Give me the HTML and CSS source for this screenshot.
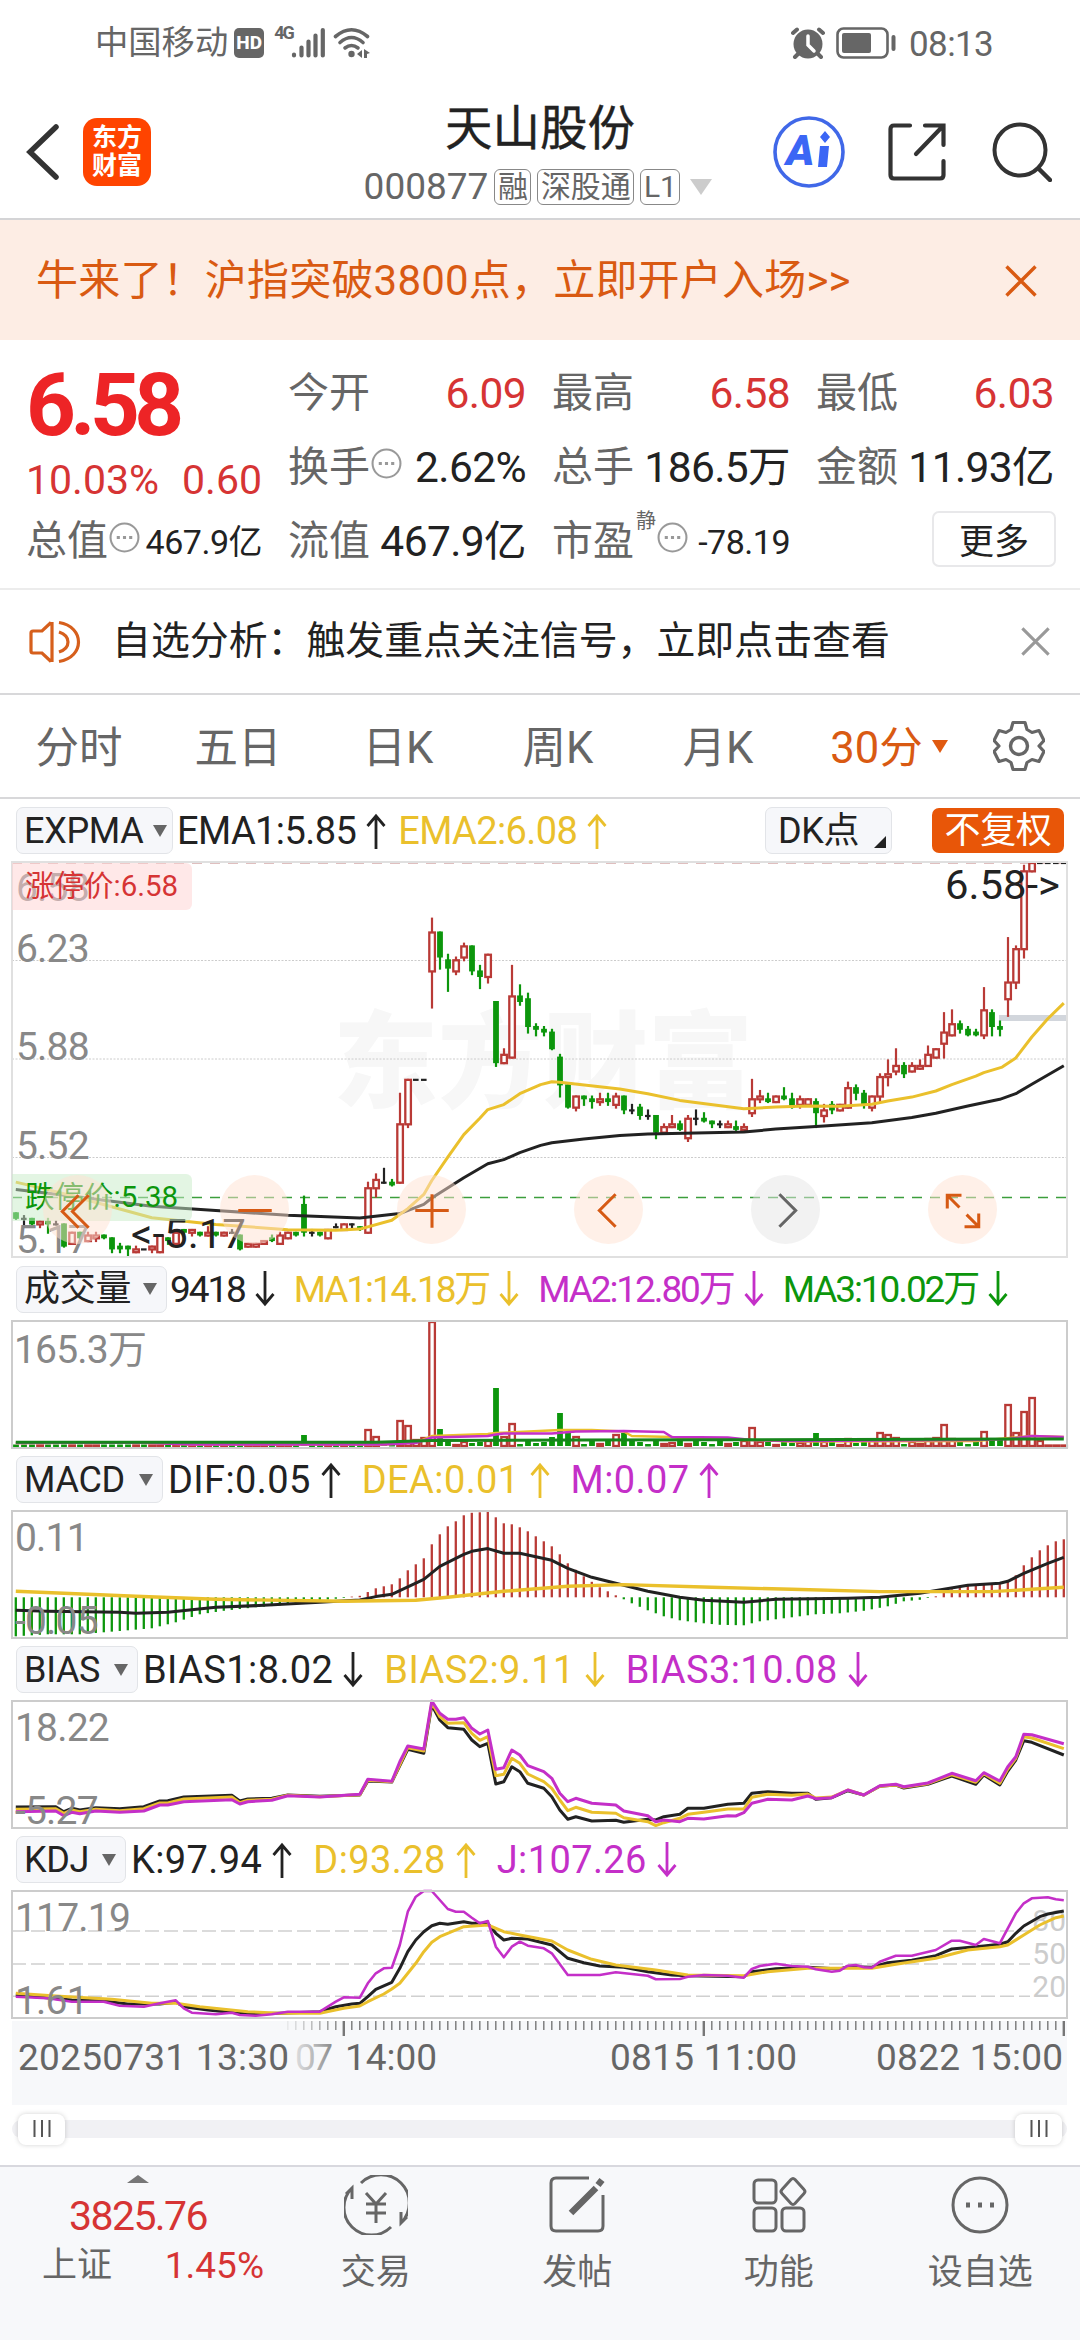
FILE: index.html
```html
<!DOCTYPE html>
<html lang="zh-CN">

<head>
    <meta charset="UTF-8">
    <meta name="viewport" content="width=device-width, initial-scale=1.0">
    <title>天山股份 000877</title>
    <link rel="stylesheet" href="styles.css">
</head>

<body>

    <!-- Shared icons -->
    <svg class="defs">
        <symbol id="up" viewBox="0 0 20 36">
            <path d="M10 36V3M1.500 13L10 3l8.500 10" fill="none" stroke="currentColor" stroke-width="2.800" />
        </symbol>
        <symbol id="down" viewBox="0 0 20 36">
            <path d="M10 0v33M1.500 23l8.500 10 8.500-10" fill="none" stroke="currentColor" stroke-width="2.800" />
        </symbol>
        <symbol id="close" viewBox="0 0 32 32">
            <path d="M1.500 1.500l29 29M30.500 1.500l-29 29" fill="none" stroke="currentColor" stroke-width="3.400" />
        </symbol>
        <symbol id="more" viewBox="0 0 30 30">
            <circle cx="15" cy="15" r="13.500" fill="none" stroke="#999" stroke-width="2" />
            <path d="M7.500 15h3M13.500 15h3M19.500 15h3" stroke="#999" stroke-width="3" />
        </symbol>
        <symbol id="grip" viewBox="0 0 18 18">
            <path d="M1.500 0v17M9 0v17M16.500 0v17" stroke="#555" stroke-width="2" />
        </symbol>
    </svg>

    <div class="status-bar">
        <span class="carrier">中国移动</span>
        <span class="hd">HD</span>
        <span class="net">4G</span>
        <svg class="signal" width="35" height="32" viewBox="0 0 35 32">
            <path d="M3 28.500v-1M10.500 28.500v-8M17.500 28.500v-14M24.500 28.500v-20M31.800 28.500V3" fill="none" stroke="#666"
                stroke-width="4.200" stroke-linecap="round" />
        </svg>
        <svg class="wifi" width="38" height="32" viewBox="0 0 38 32">
            <g fill="none" stroke="#666" stroke-width="3.600" stroke-linecap="round">
                <path d="M2.500 9.500Q18.500-4 34.500 9.500" />
                <path d="M7 15.500Q18.500 5.500 30 15.500" />
                <path d="M12 21Q18.500 16 25 21" />
            </g>
            <circle cx="18.500" cy="27" r="3.200" fill="#666" />
            <path d="M24 27l5-4v8zM31 22l6 4-3 1v4h-3z" fill="#666" />
        </svg>
        <svg class="alarm" width="34" height="32" viewBox="0 0 34 32">
            <circle cx="17" cy="17" r="14.500" fill="#666" />
            <path d="M2 6l4-3.500M32 6l-4-3.500M7 27l-3 3M27 27l3 3" stroke="#666" stroke-width="4" stroke-linecap="round" />
            <path d="M17 9v9l6 6" fill="none" stroke="#fff" stroke-width="3.500" stroke-linecap="round" />
        </svg>
        <svg class="battery" width="60" height="32" viewBox="0 0 60 32">
            <rect x="1.500" y="1.500" width="50" height="29" rx="6" fill="none" stroke="#666" stroke-width="2.600" />
            <rect x="6" y="6" width="29" height="20" rx="2" fill="#666" />
            <path d="M57.500 10v12" stroke="#666" stroke-width="4" stroke-linecap="round" />
        </svg>
        <span class="clock">08:13</span>
    </div>

    <header class="header">
        <svg class="back" width="34" height="56" viewBox="0 0 34 56">
            <path d="M30 3L4 28l26 25" fill="none" stroke="#333" stroke-width="5.500" stroke-linecap="round" />
        </svg>
        <div class="logo">东方<br>财富</div>
        <div class="title">
            <h1>天山股份</h1>
            <div class="code">
                <span>000877</span>
                <em>融</em><em>深股通</em><em>L1</em>
                <svg width="22" height="16" viewBox="0 0 22 16"><path d="M0 0h22L11 16z" fill="#ccc" /></svg>
            </div>
        </div>
        <svg class="ai" width="74" height="74" viewBox="0 0 74 74">
            <circle cx="37" cy="37" r="34" fill="none" stroke="#4068e8" stroke-width="3.600" />
            <text x="14" y="50" class="ai-text">A</text>
            <path d="M48 31h9l-2 21h-9zM53 16l5 6-5 6-5-6z" fill="#3b66f5" />
        </svg>
        <svg class="share" width="58" height="58" viewBox="0 0 58 58">
            <path d="M22 2.500H6Q2.500 2.500 2.500 6v46q0 3.500 3.500 3.500h46q3.500 0 3.500-3.500V38M37 2.500h18.500V22M55 3L28 31" fill="none"
                stroke="#333" stroke-width="4.200" stroke-linecap="round" />
        </svg>
        <svg class="search" width="60" height="60" viewBox="0 0 60 60">
            <circle cx="28" cy="28" r="25.500" fill="none" stroke="#333" stroke-width="4" />
            <path d="M47 47l11 11" stroke="#333" stroke-width="4.500" stroke-linecap="round" />
        </svg>
    </header>

    <div class="banner">
        <span>牛来了！沪指突破3800点，立即开户入场&gt;&gt;</span>
        <svg width="32" height="32"><use href="#close" /></svg>
    </div>

    <section class="quote">
        <div class="quote-price">
            <strong>6.58</strong>
            <div class="change"><span>10.03%</span><span>0.60</span></div>
            <div class="cell"><label>总值</label><svg class="tip"><use href="#more" /></svg><b class="small">467.9亿</b></div>
        </div>
        <div class="quote-grid">
            <div class="cell"><label>今开</label><b class="red">6.09</b></div>
            <div class="cell"><label>最高</label><b class="red">6.58</b></div>
            <div class="cell"><label>最低</label><b class="red">6.03</b></div>
            <div class="cell"><label>换手</label><svg class="tip"><use href="#more" /></svg><b>2.62%</b></div>
            <div class="cell"><label>总手</label><b>186.5万</b></div>
            <div class="cell"><label>金额</label><b>11.93亿</b></div>
            <div class="cell"><label>流值</label><b>467.9亿</b></div>
            <div class="cell"><label>市盈</label><sup>静</sup><svg class="tip"><use href="#more" /></svg><b class="small">-78.19</b></div>
            <div class="cell end"><button>更多</button></div>
        </div>
    </section>

    <div class="notice">
        <svg width="52" height="44" viewBox="0 0 52 44">
            <path d="M23 2v40M22 2.500L13 11H4q-2 0-2 2v18q0 2 2 2h9l9 8.500" fill="none" stroke="#d65f1c" stroke-width="3.200" />
            <path d="M30 2.500c26 4 26 35 0 39M30 12c12 4 12 16 0 20" fill="none" stroke="#d65f1c" stroke-width="3.200" />
        </svg>
        <span>自选分析：触发重点关注信号，立即点击查看</span>
        <svg class="dismiss" width="29" height="29"><use href="#close" /></svg>
    </div>

    <nav class="tabs">
        <a>分时</a><a>五日</a><a>日K</a><a>周K</a><a>月K</a>
        <a class="active">30分<svg width="16" height="13" viewBox="0 0 16 13"><path d="M0 0h16L8 13z" fill="#e05a10" /></svg></a>
        <svg class="gear" width="52" height="52" viewBox="0 0 52 52">
            <path d="M20 2.500h12l2 7 5 3 7-2 5 10-5 5.500 5 5.500-5 10-7-2-5 3-2 7H20l-2-7-5-3-7 2-5-10 5-5.500-5-5.500 5-10 7 2 5-3z" fill="none"
                stroke="#666" stroke-width="3.200" stroke-linejoin="round" />
            <circle cx="26" cy="26" r="8.500" fill="none" stroke="#666" stroke-width="3.400" />
        </svg>
    </nav>

    <main>
        <div class="legend price-legend">
            <span class="chip" style="width: 157px">EXPMA<i></i></span>
            <span>EMA1:5.85<svg><use href="#up" /></svg></span>
            <span class="yellow">EMA2:6.08<svg><use href="#up" /></svg></span>
            <span class="chip dk">DK点<u></u></span>
            <span class="chip fq">不复权</span>
        </div>
        <div class="price-chart">
            <svg id="price" width="1055" height="394"></svg>
            <div class="limit limit-up">涨停价:6.58</div>
            <div class="limit limit-down">跌停价:5.38</div>
            <div class="tools">
                <svg viewBox="0 0 68 68"><path d="M35 20L19 36l16 16M45 20L29 36l16 16" /></svg>
                <svg viewBox="0 0 68 68"><path d="M18 35h33" /></svg>
                <svg viewBox="0 0 68 68"><path d="M18 35h33M34.500 19v33" /></svg>
                <svg viewBox="0 0 68 68"><path d="M41 19L25 35l16 16" /></svg>
                <svg class="off" viewBox="0 0 68 68"><path d="M28 19l16 16-16 16" /></svg>
                <svg viewBox="0 0 68 68"><path d="M19 33V20h14M19 20l12 12M50 38v13H36M50 51L38 39" /></svg>
            </div>
        </div>

        <div class="legend volume-legend">
            <span class="chip" style="width: 151px">成交量<i></i></span>
            <span>9418<svg><use href="#down" /></svg></span>
            <span class="yellow">MA1:14.18万<svg><use href="#down" /></svg></span>
            <span class="purple">MA2:12.80万<svg><use href="#down" /></svg></span>
            <span class="green">MA3:10.02万<svg><use href="#down" /></svg></span>
        </div>
        <svg class="sub" id="volume"></svg>

        <div class="legend">
            <span class="chip" style="width: 147px">MACD<i></i></span>
            <span>DIF:0.05<svg><use href="#up" /></svg></span>
            <span class="yellow">DEA:0.01<svg><use href="#up" /></svg></span>
            <span class="purple">M:0.07<svg><use href="#up" /></svg></span>
        </div>
        <svg class="sub" id="macd"></svg>

        <div class="legend">
            <span class="chip" style="width: 122px">BIAS<i></i></span>
            <span>BIAS1:8.02<svg><use href="#down" /></svg></span>
            <span class="yellow">BIAS2:9.11<svg><use href="#down" /></svg></span>
            <span class="purple">BIAS3:10.08<svg><use href="#down" /></svg></span>
        </div>
        <svg class="sub" id="bias"></svg>

        <div class="legend">
            <span class="chip" style="width: 110px">KDJ<i></i></span>
            <span>K:97.94<svg><use href="#up" /></svg></span>
            <span class="yellow">D:93.28<svg><use href="#up" /></svg></span>
            <span class="purple">J:107.26<svg><use href="#down" /></svg></span>
        </div>
        <svg class="sub" id="kdj"></svg>

        <svg class="axis" id="axis"></svg>

        <div class="slider">
            <span class="thumb"><svg width="18" height="18"><use href="#grip" /></svg></span>
            <span class="thumb"><svg width="18" height="18"><use href="#grip" /></svg></span>
        </div>
    </main>

    <footer class="bottom">
        <div class="index">
            <svg width="22" height="8" viewBox="0 0 22 8"><path d="M0 8h22L11 0z" fill="#777" /></svg>
            <b>3825.76</b>
            <div><span>上证</span><em>1.45%</em></div>
        </div>
        <a>
            <svg viewBox="0 0 64 60">
                <path d="M17 8a27 27 0 0 1 40 40M57 37v11l6-6M47 52A27 27 0 0 1 8 13M8 24V13l-6 6" />
                <path d="M22 18l10 11 10-11M32 29v19M22 29h20M22 38h20" />
            </svg>
            交易
        </a>
        <a>
            <svg viewBox="0 0 60 60">
                <path d="M42 3H9Q4 3 4 8v43q0 5 5 5h42q5 0 5-5V20" />
                <path d="M24 38l25-25M51 10l4-5" stroke-width="6.500" />
            </svg>
            发帖
        </a>
        <a>
            <svg viewBox="0 0 60 60">
                <rect x="5" y="5" width="22" height="23" rx="4" />
                <rect x="5" y="33" width="22" height="23" rx="4" />
                <rect x="33" y="33" width="22" height="23" rx="4" />
                <path d="M42 4.500q2-2 4 0l9 10q2 2 0 4l-9 10q-2 2-4 0l-9-10q-2-2 0-4z" />
            </svg>
            功能
        </a>
        <a>
            <svg viewBox="0 0 60 60">
                <circle cx="30" cy="30" r="27" />
                <path d="M16 30h4M28 30h4M40 30h4" stroke-width="5" />
            </svg>
            设自选
        </a>
    </footer>

    <script>
        const RED = '#b93a36', GREEN = '#0c960c', BLACK = '#222', YELLOW = '#eac02c', PURPLE = '#c42fc8';
        const SUB_H = 126;
        const x = i => 3.8 + i * 8;

        // [open, close, high, low] in cents, one entry per 30 minutes
        const candles = [
            [532, 530, 532, 530], [530, 530, 531, 528], [530, 528, 530, 528], [528, 529, 529, 527], [529, 528, 530, 525], [528, 528, 529, 528],
            [528, 520, 528, 520], [521, 525, 525, 521], [525, 523, 525, 522], [522, 524, 525, 522], [523, 524, 525, 522], [524, 523, 524, 523],
            [523, 519, 523, 518], [520, 519, 521, 518], [520, 519, 520, 517], [518, 519, 520, 518], [519, 519, 519, 519], [519, 520, 520, 518],
            [518, 524, 524, 518], [523, 522, 523, 521], [521, 525, 525, 520], [526, 525, 526, 524], [525, 526, 526, 524], [525, 524, 525, 524],
            [524, 525, 527, 524], [525, 524, 525, 524], [524, 525, 525, 524], [525, 525, 526, 525], [524, 519, 524, 519], [520, 521, 521, 520],
            [520, 521, 521, 520], [521, 522, 522, 521], [523, 522, 524, 522], [521, 524, 525, 521], [523, 525, 525, 523], [525, 524, 525, 524],
            [535, 525, 538, 524], [525, 525, 526, 524], [525, 524, 525, 524], [523, 526, 526, 523], [527, 527, 528, 527], [526, 528, 528, 526],
            [528, 528, 528, 527], [527, 526, 527, 526], [525, 541, 543, 525], [541, 544, 546, 538], [543, 543, 548, 543], [543, 542, 544, 542],
            [543, 564, 575, 543], [564, 580, 580, 563], [580, 580, 580, 580], [580, 580, 580, 580], [619, 633, 638, 606], [633, 624, 633, 620],
            [623, 620, 625, 612], [619, 623, 624, 618], [624, 628, 629, 623], [628, 619, 628, 618], [619, 617, 621, 613], [617, 625, 625, 615],
            [608, 586, 608, 585], [586, 589, 591, 586], [588, 610, 621, 588], [610, 608, 614, 607], [609, 599, 611, 597], [599, 598, 600, 596],
            [598, 597, 599, 596], [597, 591, 598, 591], [588, 578, 589, 574], [578, 570, 578, 570], [570, 574, 574, 569], [574, 573, 574, 571],
            [573, 572, 574, 570], [572, 573, 575, 571], [573, 572, 575, 571], [571, 574, 575, 570], [574, 569, 574, 568], [569, 569, 571, 568],
            [570, 567, 571, 566], [567, 567, 569, 566], [567, 561, 567, 559], [561, 563, 564, 561], [563, 564, 567, 563], [564, 562, 565, 562],
            [559, 566, 567, 558], [566, 566, 569, 564], [566, 565, 568, 565], [565, 564, 565, 563], [564, 564, 565, 563], [563, 564, 565, 563],
            [563, 562, 565, 562], [562, 563, 564, 562], [568, 573, 580, 567], [573, 574, 576, 572], [573, 572, 575, 572], [572, 574, 574, 572],
            [574, 573, 577, 573], [573, 570, 575, 570], [571, 573, 574, 570], [571, 573, 573, 571], [572, 568, 573, 563], [567, 569, 571, 565],
            [571, 569, 572, 568], [569, 571, 571, 569], [570, 577, 579, 570], [577, 575, 578, 573], [575, 571, 576, 570], [570, 574, 574, 569],
            [574, 581, 582, 572], [581, 582, 587, 578], [583, 585, 591, 582], [585, 582, 586, 581], [583, 585, 586, 583], [584, 585, 587, 584],
            [585, 589, 592, 585], [588, 591, 591, 588], [593, 597, 604, 588], [596, 600, 605, 596], [600, 598, 601, 597], [598, 596, 599, 596],
            [597, 596, 598, 596], [596, 605, 613, 595], [604, 599, 605, 596], [599, 598, 601, 596], [609, 615, 631, 603], [615, 627, 628, 613],
            [627, 655, 657, 624], [655, 658, 658, 655], [658, 658, 658, 658], [658, 658, 658, 658], [658, 658, 658, 658], [658, 658, 658, 658]
        ];

        const el = {};
        ['price', 'volume', 'macd', 'bias', 'kdj', 'axis'].forEach(id => el[id] = document.getElementById(id));
        const add = (id, html) => el[id].insertAdjacentHTML('beforeend', html);

        // points is a flat list: index, value, index, value...
        function line(id, points, color, y, width = 3) {
            const out = [];
            for (let i = 0; i < points.length; i += 2) {
                out.push(`${x(points[i]).toFixed(1)},${y(points[i + 1]).toFixed(1)}`);
            }
            add(id, `<polyline points="${out.join(' ')}" fill="none" stroke="${color}" stroke-width="${width}" stroke-linejoin="round"/>`);
        }

        function label(id, text, lx, ly, cls = 'scale') {
            add(id, `<text x="${lx}" y="${ly}" class="${cls}">${text}</text>`);
        }

        function colorOf([open, close]) {
            return close > open ? RED : close < open ? GREEN : BLACK;
        }

        function box(id, cx, top, bottom, color) {
            const h = Math.max(bottom - top, 1.5);
            if (color === RED) {
                add(id, `<rect x="${cx - 2.5}" y="${top}" width="5.6" height="${h}" fill="#fff" stroke="${RED}" stroke-width="2.3"/>`);
            } else {
                add(id, `<rect x="${cx - 2.7}" y="${top - 1}" width="5.8" height="${h + 1}" fill="${color}"/>`);
            }
        }

        // ---- price ----
        const py = c => 1 + (658 - c) * 2.78;
        add('price', '<text x="321" y="237" class="watermark">东方财富</text>');
        [98.5, 197, 295.5].forEach(y => add('price', `<path d="M0 ${y}H1055" stroke="#ccc" stroke-dasharray="2 1.500"/>`));
        add('price', '<path d="M0 .8H1055" stroke="#c08080" stroke-width="1.500" stroke-dasharray="10 8"/>');
        add('price', '<path d="M0 335.500H1055" stroke="#3c9e3c" stroke-width="1.500" stroke-dasharray="10 8"/>');
        add('price', '<path d="M987 156H1055" stroke="#d2d6dc" stroke-width="6"/>');
        candles.forEach((c, i) => {
            const color = colorOf(c);
            if (c[2] > c[3]) {
                add('price', `<path d="M${x(i) + 0.2} ${py(c[2]) - 1}V${py(c[3]) + 1}" stroke="${color}" stroke-width="2.200"/>`);
            }
            if (color === BLACK) {
                add('price', `<path d="M${x(i) - 2.8} ${py(c[0])}h5.600" stroke="${BLACK}" stroke-width="2.200"/>`);
            } else {
                box('price', x(i), py(Math.max(c[0], c[1])), py(Math.min(c[0], c[1])), color);
            }
        });
        line('price', [0, 540.5, 8, 537.9, 11, 536.7, 17, 534.5, 25, 533, 34, 531.3, 43, 530.3, 48, 531.9, 51, 535.2, 52, 537.5, 56, 544.8,
            59, 549.8, 61, 551.3, 63, 553.8, 65.6, 556.4, 67, 557.4, 71, 558.7, 75.5, 560, 79, 560.5, 91, 561.2, 95, 562.3, 101, 563.4,
            107, 564.6, 112, 566.5, 115, 568, 119, 570.6, 123, 573, 125, 575, 127, 578.4, 131, 585.1], BLACK, py);
        line('price', [0, 543.2, 4, 540.5, 8, 537.6, 9, 536.7, 17, 530.4, 25, 528, 34, 526.1, 40, 525.9, 43, 526.3, 47, 529.5, 49, 533.7,
            51, 538.8, 52, 543.8, 54, 552.2, 56, 560.3, 58, 566.2, 59, 569.3, 61, 571.1, 63, 575, 65.6, 578.3, 67, 579.3, 68, 579.1,
            75.5, 576.7, 79, 575, 83, 572.6, 91, 569.6, 95, 570.2, 99, 570.6, 103, 570.5, 107, 571.2, 109, 572.4, 112, 573.8, 115, 576,
            117, 578.3, 120, 581.3, 121, 582.6, 123.3, 584.6, 125, 587.9, 127, 595.4, 129, 602, 131, 607.6], YELLOW, py);
        label('price', '6.58', 4, 39);
        label('price', '6.23', 4, 100);
        label('price', '5.88', 4, 198);
        label('price', '5.52', 4, 297);
        label('price', '5.17', 4, 391);
        add('price', '<text x="119" y="386" class="mark" textLength="115" lengthAdjust="spacingAndGlyphs">&lt;-5.17</text>');
        add('price', '<text x="933" y="37" class="mark" textLength="115" lengthAdjust="spacingAndGlyphs">6.58-&gt;</text>');

        // ---- volume ----
        const big = {
            36: 11, 44: 17, 45: 10, 48: 26, 49: 21, 50: 7, 51: 9, 52: 125, 53: 17, 54: 6, 60: 58, 61: 10, 62: 23, 67: 9, 68: 33, 69: 14,
            70: 10, 74: 6, 75: 12, 76: 13, 92: 19, 100: 13, 104: 8, 108: 14, 109: 12, 110: 9, 114: 8, 115: 9, 116: 22, 117: 8, 121: 15,
            122: 7, 123: 6, 124: 42, 125: 14, 126: 35, 127: 49, 128: 6
        };
        const small = [5, 3, 4, 6, 3, 5, 4, 2];
        candles.forEach((c, i) => {
            const h = big[i] || (i < 44 ? 1.5 : i > 128 ? 1.5 : small[i % 8]);
            const color = i === 50 || i === 51 || i > 127 ? RED : colorOf(c) === BLACK ? GREEN : colorOf(c);
            box('volume', x(i), SUB_H - h, SUB_H - 1, color);
        });
        const vy = v => SUB_H - v;
        line('volume', [0, 4, 15, 4.5, 22, 2.5, 46, 2.5, 50, 4.500, 52, 11, 59, 13, 60, 14, 68, 17, 72, 17, 76, 15.5, 77, 11, 82, 10, 84, 8,
            92, 7, 97, 5.5, 120, 6, 127, 11, 131, 10], YELLOW, vy, 2.4);
        line('volume', [0, 4, 15, 4.5, 22, 2.5, 46, 2.5, 50, 4, 52, 9.5, 59, 11, 60, 12.5, 61, 13.5, 67, 13.5, 70, 15.5, 76, 16, 81, 15, 82, 10,
            89, 9.5, 92, 7, 97, 6, 120, 7, 124, 8, 127, 11, 131, 10], PURPLE, vy, 2.6);
        line('volume', [0, 4.7, 45, 4.7, 52, 6.5, 70, 7, 90, 7.3, 131, 8], '#16851b', vy, 3);
        label('volume', '165.3万', 2, 42);

        // ---- MACD ----
        const bars = [0, -39, 4, -37, 8, -37, 14, -33, 17, -31, 20, -25, 23, -17, 26, -13.5, 30, -10, 34, -7.5, 38, -3, 41, -0.7, 42, 0.7, 43, 1.5,
            45, 9, 47, 13, 48, 19, 49, 27, 50, 33, 51, 39, 52, 53, 53, 63, 54, 71, 55, 76, 56, 82, 57, 84.5, 58, 85, 59, 86, 60, 80, 61, 74,
            62, 73, 63, 70, 64, 66, 65, 61, 66, 56, 67, 51, 68, 43, 69, 34, 71, 21, 73, 10, 74, 6, 75, 2, 76, -2, 77, -6, 79, -13, 81, -19,
            83, -23, 86, -26, 88, -27.5, 91, -28, 93, -24, 95, -22, 98, -19, 100, -17, 103, -16, 106, -13.5, 109, -9, 111, -4, 113, -2.5,
            114, -0.7, 115, 1, 117, 8, 119, 12, 121, 13, 123, 13, 124, 17, 125, 22, 126, 32, 127, 40, 128, 47, 129, 52, 130, 56, 131, 58];
        const zero = 86.3;
        const my = v => zero - v;
        const bar = (i, v) => add('macd', `<path d="M${x(i)} ${zero}V${my(v)}" stroke="${v > 0 ? RED : GREEN}" stroke-width="2.300"/>`);
        for (let k = 0; k < bars.length - 2; k += 2) {
            const [i0, v0, i1, v1] = bars.slice(k, k + 4);
            for (let i = i0; i < i1; i++) {
                bar(i, v0 + (v1 - v0) * (i - i0) / (i1 - i0));
            }
        }
        bar(131, 58);
        line('macd', [0, -13, 4, -14, 13, -15, 15, -16, 19, -15, 25, -10, 31, -8, 38, -5, 43, -2.7, 45, 0.7, 47, 3, 51, 18, 53, 31, 56, 43,
            57, 46, 59, 48.7, 61, 44, 63, 44, 67, 37, 69, 29, 72, 20, 75, 14, 79, 6, 83, 0, 86, -3, 91, -5, 95, -2, 104, -1, 108, 0, 113, 4,
            116, 8, 119, 12, 123, 14, 124, 16, 126, 24, 129, 34, 131, 40], BLACK, my);
        line('macd', [0, 6, 15, 1, 25, -2, 41, -4, 50, -3, 54, 0, 61, 6, 69, 11, 76, 12.7, 87, 10, 97, 8, 108, 5.7, 122, 5.7, 127, 8, 131, 10],
            YELLOW, my, 3.4);
        label('macd', '0.11', 3, 40);
        label('macd', '-0.05', 3, 123);

        // ---- BIAS and KDJ, on a 178 (top) to 556 (bottom) scale ----
        const sy = v => (v - 178) / 3;
        line('bias', [0, 496, 5, 495, 6, 510, 7, 500, 8, 505, 10, 498, 13, 501, 16, 495, 18, 478, 19, 477, 21, 466, 27, 461, 28, 478, 29, 472,
            32, 470, 34, 460, 38, 464, 43, 460, 44, 418, 47, 421, 49, 323, 51, 335, 52, 190, 53, 235, 54, 258, 56, 263, 57, 295, 58, 315,
            59, 305, 60, 427, 61, 420, 62, 375, 63, 390, 64, 425, 66, 440, 67, 465, 68, 505, 69, 533, 70, 525, 72, 538, 75, 536, 76, 542,
            79, 533, 80, 535, 81, 525, 83, 518, 84, 500, 86, 500, 89, 488, 91, 485, 92, 455, 94, 450, 97, 455, 99, 455, 100, 473, 102, 468,
            104, 447, 106, 460, 108, 434, 110, 430, 111, 439, 114, 428, 117, 403, 120, 428, 121, 400, 123, 430, 124, 388, 125, 355, 126, 297,
            127, 302, 131, 340], BLACK, sy);
        line('bias', [0, 503, 5, 501, 6, 515, 7, 505, 8, 510, 10, 503, 13, 507, 16, 501, 18, 484, 19, 484, 21, 472, 27, 466, 28, 483, 29, 476,
            32, 473, 34, 461, 38, 465, 43, 459, 44, 416, 47, 420, 49, 318, 51, 328, 52, 184, 53, 225, 54, 245, 56, 243, 57, 275, 58, 296,
            59, 285, 60, 402, 61, 398, 62, 350, 63, 365, 64, 397, 66, 420, 67, 440, 68, 475, 69, 507, 70, 497, 72, 512, 75, 515, 76, 528,
            79, 540, 80, 552, 81, 543, 83, 530, 84, 518, 86, 512, 89, 502, 91, 502, 92, 467, 94, 458, 97, 461, 99, 457, 100, 469, 102, 466,
            104, 445, 106, 460, 108, 434, 110, 430, 111, 437, 114, 426, 117, 399, 120, 422, 121, 396, 123, 425, 124, 382, 125, 350, 126, 285,
            127, 289, 131, 321], YELLOW, sy);
        line('bias', [0, 510, 5, 508, 6, 522, 7, 512, 8, 516, 10, 508, 13, 512, 16, 508, 18, 490, 19, 490, 21, 480, 27, 474, 28, 487, 29, 480,
            32, 476, 34, 462, 38, 466, 43, 458, 44, 413, 47, 419, 48, 360, 49, 313, 51, 322, 52, 178, 53, 215, 54, 233, 55, 233, 56, 228,
            57, 260, 58, 277, 59, 265, 60, 383, 61, 378, 62, 325, 63, 340, 64, 372, 66, 390, 67, 410, 68, 455, 69, 480, 70, 470, 72, 485,
            75, 490, 76, 508, 79, 522, 80, 540, 81, 535, 83, 540, 84, 530, 86, 532, 89, 522, 90, 523, 91, 513, 92, 485, 94, 473, 97, 475,
            99, 463, 100, 471, 102, 468, 104, 445, 106, 460, 108, 432, 110, 428, 111, 435, 114, 424, 117, 395, 120, 417, 121, 393, 123, 418,
            124, 375, 125, 345, 126, 278, 127, 279, 131, 306], PURPLE, sy);
        label('bias', '18.22', 3, 40);
        label('bias', '-5.27', 3, 123);

        [298, 397, 494].forEach(v => add('kdj', `<path d="M0 ${sy(v)}H1018" stroke="#d0d0d0" stroke-width="1.500" stroke-dasharray="14 5"/>`));
        label('kdj', '80', 1054, 40, 'level');
        label('kdj', '50', 1054, 73, 'level');
        label('kdj', '20', 1054, 106, 'level');
        line('kdj', [0, 490, 7, 505, 11, 508, 14, 517, 18, 517, 20, 512, 21, 525, 24, 535, 29, 547, 33, 545, 38, 540, 40, 525, 42, 517, 43, 515,
            44, 495, 45, 473, 47, 452, 48, 410, 49, 360, 50, 325, 51, 300, 52, 282, 53, 275, 54, 278, 56, 270, 57, 275, 59, 275, 60, 305,
            61, 325, 62, 320, 64, 322, 67, 340, 69, 380, 71, 393, 73, 403, 76, 407, 79, 420, 82, 430, 84, 432, 91, 435, 92, 420, 95, 411,
            99, 407, 103, 412, 104, 405, 107, 407, 109, 393, 112, 386, 115, 372, 117, 352, 121, 343, 123, 338, 124, 330, 125, 305, 126, 283,
            128, 255, 129, 247, 131, 238], BLACK, sy);
        line('kdj', [0, 485, 5, 493, 12, 503, 17, 515, 20, 515, 23, 525, 29, 540, 33, 545, 38, 545, 41, 530, 43, 523, 44, 510, 46, 487, 47, 472,
            48, 455, 50, 395, 51, 360, 52, 332, 53, 315, 56, 285, 59, 280, 61, 300, 63, 310, 67, 328, 69, 355, 72, 383, 75, 400, 80, 415,
            84, 430, 91, 432, 94, 420, 99, 410, 107, 410, 110, 398, 115, 380, 119, 355, 123, 345, 124, 340, 126, 310, 128, 280, 130, 258,
            131, 253], YELLOW, sy);
        line('kdj', [0, 495, 4, 500, 7, 510, 11, 510, 13, 522, 16, 525, 18, 515, 20, 506, 21, 530, 22, 543, 25, 548, 27, 543, 28, 550, 30, 552,
            32, 548, 34, 540, 38, 540, 40, 510, 41, 497, 43, 498, 44, 455, 45, 425, 46, 410, 47, 408, 48, 340, 49, 240, 50, 195, 51, 178,
            52, 178, 53, 205, 54, 232, 55, 240, 56, 240, 57, 258, 58, 275, 59, 268, 60, 345, 61, 377, 62, 345, 63, 330, 64, 342, 66, 350,
            67, 365, 69, 430, 73, 430, 75, 422, 77, 427, 79, 432, 80, 443, 83, 442, 84, 435, 86, 430, 89, 432, 91, 438, 92, 412, 93, 403,
            95, 396, 97, 403, 99, 405, 100, 413, 102, 420, 103, 417, 104, 402, 105, 400, 106, 407, 107, 408, 108, 390, 110, 372, 112, 372,
            115, 355, 117, 327, 118, 327, 120, 340, 121, 322, 123, 335, 124, 290, 125, 245, 126, 215, 127, 200, 129, 197, 130, 203,
            131, 206], PURPLE, sy, 2.6);
        label('kdj', '117.19', 3, 40);
        label('kdj', '1.61', 3, 123);

        // ---- time axis ----
        for (let i = 34; i <= 131; i++) {
            const major = i === 41 || i === 86 || i === 131;
            const fade = Math.min(1, (i - 33) / 8);
            add('axis', `<path d="M${x(i)} 0v${major ? 15 : 9}" stroke="#777" stroke-width="${major ? 2.4 : 1.4}" opacity="${fade}"/>`);
        }
        add('axis', '<defs><linearGradient id="fade"><stop offset="0" stop-color="#aaa" stop-opacity=".35"/>'
            + '<stop offset="1" stop-color="#888"/></linearGradient></defs>');
        add('axis', '<text x="6" y="49" class="time" textLength="271">20250731 13:30</text>');
        add('axis', '<text x="283" y="49" class="time" textLength="38" fill="url(#fade)">07</text>');
        add('axis', '<text x="333" y="49" class="time" textLength="92">14:00</text>');
        add('axis', '<text x="598" y="49" class="time" textLength="187">0815 11:00</text>');
        add('axis', '<text x="864" y="49" class="time" textLength="187">0822 15:00</text>');
    </script>

</body>

</html>
```
FILE: styles.css
```css
* {
    box-sizing: border-box;
}

body {
    width: 1080px;
    height: 2340px;
    margin: 0;
    overflow: hidden;
    background: #fff;
    color: #222;
    font-family: Roboto, "Noto Sans CJK SC", sans-serif;
    font-size: 38px;
    line-height: 1;
}

svg {
    display: block;
    flex: none;
}

.defs {
    position: absolute;
    width: 0;
    height: 0;
}

em,
b {
    font-style: normal;
    font-weight: 400;
}

/* Status bar */
.status-bar {
    display: flex;
    align-items: center;
    height: 86px;
    padding: 0 86px 0 95px;
    color: #666;
}

.carrier {
    font-size: 33.3px;
}

.hd {
    width: 30px;
    margin-left: 6px;
    border-radius: 5px;
    background: #666;
    color: #fff;
    font-size: 19px;
    font-weight: 800;
    line-height: 30px;
    text-align: center;
}

.net {
    margin: -20px 0 0 10px;
    width: 17px;
    font-size: 18px;
    font-weight: 700;
    letter-spacing: -2px;
    line-height: 18px;
}

.wifi {
    margin-left: 7px;
}

.alarm {
    margin-left: auto;
    margin-right: 11px;
}

.battery {
    margin-right: 13px;
}

.clock {
    font-size: 35px;
    margin-top: 3px;
    width: 85px;
    letter-spacing: -0.6px;
}

/* Header */
.header {
    display: flex;
    align-items: center;
    height: 134px;
    padding: 0 28px 0 26px;
    border-bottom: 2px solid #d4d4d6;
}

.logo {
    width: 68px;
    height: 68px;
    margin-left: 23px;
    padding-top: 6px;
    border-radius: 14px;
    background: #ff4400;
    color: #fff;
    font-size: 25px;
    font-weight: 700;
    line-height: 28px;
    text-align: center;
}

.title {
    width: 390px;
    margin-left: 194px;
    text-align: center;
}

.title h1 {
    margin: 0 0 9px;
    font-size: 47.5px;
    font-weight: 400;
    line-height: 60px;
    -webkit-text-stroke: 0.4px #222;
}

.code {
    display: flex;
    align-items: center;
    justify-content: center;
    gap: 6px;
    margin-left: -4px;
    color: #666;
    font-size: 37px;
    line-height: 38px;
}

.code em {
    padding: 0 2.5px;
    border: 1.5px solid #888;
    border-radius: 6px;
    font-size: 30px;
    line-height: 34px;
}

.code svg {
    margin-left: 4px;
}

.ai {
    margin-left: 37px;
}

.ai-text {
    fill: #3b66f5;
    font-size: 43px;
    font-weight: 900;
    font-style: italic;
}

.share {
    margin-left: 42px;
}

.search {
    margin-left: auto;
}

/* Promo banner */
.banner {
    display: flex;
    align-items: center;
    justify-content: space-between;
    height: 120px;
    padding: 2px 43px 0 36px;
    background: #fdede4;
    color: #d95a12;
    font-size: 42px;
    letter-spacing: 0.2px;
}

/* Quote */
.quote {
    display: flex;
    height: 250px;
    padding: 16px 26px 0;
    border-bottom: 2px solid #ececec;
}

.quote-price {
    width: 237px;
    margin-right: 26px;
}

.quote-price strong {
    display: block;
    height: 98px;
    color: #ed2426;
    font-size: 87px;
    font-weight: 700;
    line-height: 98px;
    letter-spacing: -5.6px;
}

.change {
    display: flex;
    justify-content: space-between;
    height: 50px;
    color: #d63434;
    font-size: 41px;
    line-height: 52px;
}

.quote-grid {
    display: grid;
    grid-template-columns: repeat(3, 238px);
    column-gap: 26px;
    grid-auto-rows: 74px;
}

.cell {
    display: flex;
    align-items: center;
    height: 74px;
    white-space: nowrap;
}

.cell label {
    color: #666;
    font-size: 41px;
}

.cell b {
    margin-left: auto;
    padding-top: 2px;
    font-size: 42.5px;
    letter-spacing: -0.6px;
}

.cell b.red {
    color: #d63434;
}

.cell b.small {
    font-size: 34px;
    letter-spacing: -0.5px;
}

.cell .tip {
    width: 31px;
    height: 31px;
    margin-top: -7px;
    margin-left: 1px;
}

.cell sup {
    align-self: flex-start;
    margin: 7px 0 0 2px;
    color: #666;
    font-size: 20px;
    line-height: 20px;
}

.cell.end {
    justify-content: flex-end;
}

.cell button {
    width: 124px;
    height: 56px;
    margin-top: -4px;
    margin-right: -2px;
    padding: 0;
    border: 2px solid #e8e8ea;
    border-radius: 7px;
    background: #fff;
    color: #222;
    font: 35px/50px "Noto Sans CJK SC", sans-serif;
}

/* Notice */
.notice {
    display: flex;
    align-items: center;
    height: 105px;
    padding: 0 30px 0 29px;
    border-bottom: 2px solid #d8d8da;
    font-size: 38.9px;
}

.notice span {
    margin-left: 31px;
}

.dismiss {
    margin-left: auto;
    color: #999;
}

/* Period tabs */
.tabs {
    display: grid;
    grid-template-columns: 158px 160px 160px 160px 160px 182px 78px;
    align-items: center;
    justify-items: center;
    height: 104px;
    padding-top: 6px;
    border-bottom: 2px solid #d8d8da;
    color: #666;
    font-size: 43.5px;
}

.tabs .active {
    display: flex;
    align-items: center;
    gap: 9px;
    color: #d95a12;
}

.tabs .active svg,
.tabs .gear {
    margin-top: -6px;
}

/* Charts */
main {
    height: 1366px;
    padding: 0 13px 0 12px;
    overflow: hidden;
}

.legend {
    display: flex;
    align-items: center;
    gap: 21px;
    height: 63px;
    padding-left: 4px;
    font-size: 38px;
    letter-spacing: 0.4px;
    white-space: nowrap;
}

.legend > span {
    display: flex;
    align-items: center;
    gap: 10px;
}

.legend.price-legend {
    gap: 12px;
    letter-spacing: -0.6px;
}

.legend.volume-legend {
    gap: 19px;
    height: 64px;
    font-size: 37px;
    letter-spacing: -2.1px;
}

.legend span svg {
    width: 20px;
    height: 36px;
}

.legend > .chip {
    justify-content: space-between;
    height: 47px;
    margin-right: -16px;
    padding: 0 9px 0 7px;
    border: 1.5px solid #e2e4e8;
    border-radius: 7px;
    background: #f6f7fa;
    font-size: 36px;
    letter-spacing: -0.3px;
}

.price-legend > .chip {
    margin-right: -8px;
}

.chip i {
    border: 7.5px solid transparent;
    border-top: 12px solid #666;
    border-bottom: 0;
}

.legend > .dk {
    width: 127px;
    margin-left: auto;
    margin-right: 28px;
    padding-left: 12px;
    padding-right: 5px;
}

.dk u {
    align-self: flex-end;
    margin-bottom: 5px;
    border-left: 12px solid transparent;
    border-bottom: 12px solid #222;
}

.legend > .fq {
    width: 132px;
    height: 45px;
    margin-right: 3px;
    border: 0;
    padding: 0;
    justify-content: center;
    background: #e85608;
    color: #fff;
}

.yellow {
    color: #eac02c;
}

.purple {
    color: #c42fc8;
}

.green {
    color: #0c960c;
}

.price-chart {
    position: relative;
    height: 395px;
    outline: 2px solid #e0e0e0;
    outline-offset: -1px;
}

#price {
    overflow: visible;
}

.limit {
    position: absolute;
    left: 0;
    width: 180px;
    height: 47px;
    padding-left: 13px;
    border-radius: 0 6px 6px 0;
    font-size: 29.5px;
    line-height: 47px;
}

.limit-up {
    top: 1px;
    background: rgba(255, 210, 210, 0.5);
    color: #d63434;
}

.limit-down {
    top: 312px;
    background: rgba(200, 236, 200, 0.5);
    color: #0c960c;
}

/* Zoom and scroll buttons over the chart */
.tools {
    position: absolute;
    left: 31px;
    top: 313px;
    display: flex;
    gap: 108px;
}

.tools svg {
    width: 69px;
    height: 69px;
    border-radius: 50%;
    background: rgba(255, 226, 210, 0.5);
    fill: none;
    stroke: #d65a14;
    stroke-width: 3;
}

.tools .off {
    background: rgba(230, 230, 230, 0.5);
    stroke: #666;
}

.sub {
    width: 1055px;
    height: 127px;
    overflow: visible;
    outline: 2px solid #ccc;
    outline-offset: -1px;
}

.watermark {
    fill: #f7f7f7;
    font-size: 105px;
    font-weight: 900;
}

.scale {
    fill: #888;
    font-size: 39px;
    letter-spacing: -0.8px;
}

.mark {
    fill: #222;
    font-size: 40px;
}

.level {
    fill: #ccc;
    font-size: 30px;
    text-anchor: end;
}

.axis {
    width: 1055px;
    height: 84px;
    margin-top: 3px;
    background: #f7f8fa;
}

.time {
    font-size: 37px;
}

.time:not([fill]) {
    fill: #666;
}

/* Range slider */
.slider {
    display: flex;
    align-items: center;
    justify-content: space-between;
    height: 18px;
    margin-top: 15px;
    padding: 0 5px 0 6px;
    border-radius: 9px;
    background: #f1f1f4;
}

.thumb {
    display: flex;
    align-items: center;
    justify-content: center;
    width: 47px;
    height: 31px;
    border-radius: 8px;
    background: #fff;
    box-shadow: 0 0 5px rgba(0, 0, 0, 0.18);
}

/* Bottom bar */
.bottom {
    display: grid;
    grid-template-columns: 275px repeat(4, 201.5px);
    height: 176px;
    border-top: 2px solid #d8d8de;
    background: #f7f8fa;
    color: #666;
    font-size: 35px;
}

.bottom a {
    display: flex;
    flex-direction: column;
    align-items: center;
    gap: 20px;
    padding-top: 8px;
}

.bottom a svg {
    width: 64px;
    height: 60px;
    fill: none;
    stroke: #666;
    stroke-width: 3;
}

.index {
    display: flex;
    flex-direction: column;
    align-items: center;
    padding: 8px 11px 0 42px;
}

.index b {
    margin-top: 13px;
    color: #d63434;
    font-size: 41px;
    letter-spacing: -1.6px;
}

.index svg,
.index b {
    margin-right: 30px;
}

.index div {
    display: flex;
    align-items: center;
    justify-content: space-between;
    width: 100%;
    height: 56px;
}

.index em {
    color: #d63434;
    font-size: 37px;
}
```
